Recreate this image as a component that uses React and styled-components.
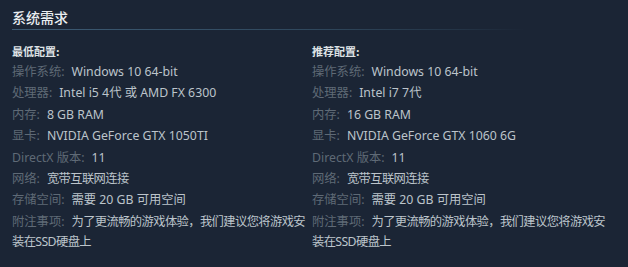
import React from "react";
import styled, { createGlobalStyle } from "styled-components";

const Global = createGlobalStyle`
  html, body { margin: 0; padding: 0; background: #1b2535; }
  body { font-family: "Noto Sans", "Noto Sans CJK SC", sans-serif; }
`;

const Panel = styled.div`
  width: 628px;
  height: 267px;
  box-sizing: border-box;
  padding: 6px 12px 0 12px;
  background: #1b2535;
  overflow: hidden;
`;

const Title = styled.h2`
  margin: 0;
  font-size: 14px;
  font-weight: 500;
  line-height: 22px;
  color: #e9edf0;
  font-family: "Noto Sans CJK SC", sans-serif;
  padding-bottom: 2px;
  border-bottom: 1px solid transparent;
  background: linear-gradient(to right, #3d5b74 0%, #2f475c 50%, rgba(47, 71, 92, 0.4) 75%, rgba(27, 37, 53, 0) 85%) bottom left / 100% 1px no-repeat;
`;

const Columns = styled.div`
  display: grid;
  grid-template-columns: 300px 300px;
  margin-top: 12px;
`;

const Column = styled.div`
  min-width: 0;
`;

const Heading = styled.div`
  font-family: "Noto Sans CJK SC", sans-serif;
  font-size: 11px;
  font-weight: 700;
  color: #dfe3e6;
  line-height: 16px;
  margin-bottom: 3px;
`;

const Row = styled.div`
  font-size: 12.3px;
  line-height: 20px;
  margin-bottom: 1.4px;
  color: #bcc4cb;
`;

const Label = styled.span`
  color: #5f6a76;
  margin-right: 7px;
`;

const Value = styled.span`
  letter-spacing: ${(p) => (p.$tight ? "-0.62px" : "0")};
`;

const minimum = [
  ["操作系统:", "Windows 10 64-bit"],
  ["处理器:", "Intel i5 4代 或 AMD FX 6300"],
  ["内存:", "8 GB RAM"],
  ["显卡:", "NVIDIA GeForce GTX 1050TI"],
  ["DirectX 版本:", "11"],
  ["网络:", "宽带互联网连接", true],
  ["存储空间:", "需要 20 GB 可用空间"],
  ["附注事项:", "为了更流畅的游戏体验，我们建议您将游戏安装在SSD硬盘上", true],
];

const recommended = [
  ["操作系统:", "Windows 10 64-bit"],
  ["处理器:", "Intel i7 7代"],
  ["内存:", "16 GB RAM"],
  ["显卡:", "NVIDIA GeForce GTX 1060 6G"],
  ["DirectX 版本:", "11"],
  ["网络:", "宽带互联网连接", true],
  ["存储空间:", "需要 20 GB 可用空间"],
  ["附注事项:", "为了更流畅的游戏体验，我们建议您将游戏安装在SSD硬盘上", true],
];

const Spec = ({ heading, rows }) => (
  <Column>
    <Heading>{heading}</Heading>
    {rows.map(([k, v, tight]) => (
      <Row key={k}>
        <Label>{k}</Label>
        <Value $tight={tight}>{v}</Value>
      </Row>
    ))}
  </Column>
);

export default function App() {
  return (
    <>
      <Global />
      <Panel>
        <Title>系统需求</Title>
        <Columns>
          <Spec heading="最低配置:" rows={minimum} />
          <Spec heading="推荐配置:" rows={recommended} />
        </Columns>
      </Panel>
    </>
  );
}
